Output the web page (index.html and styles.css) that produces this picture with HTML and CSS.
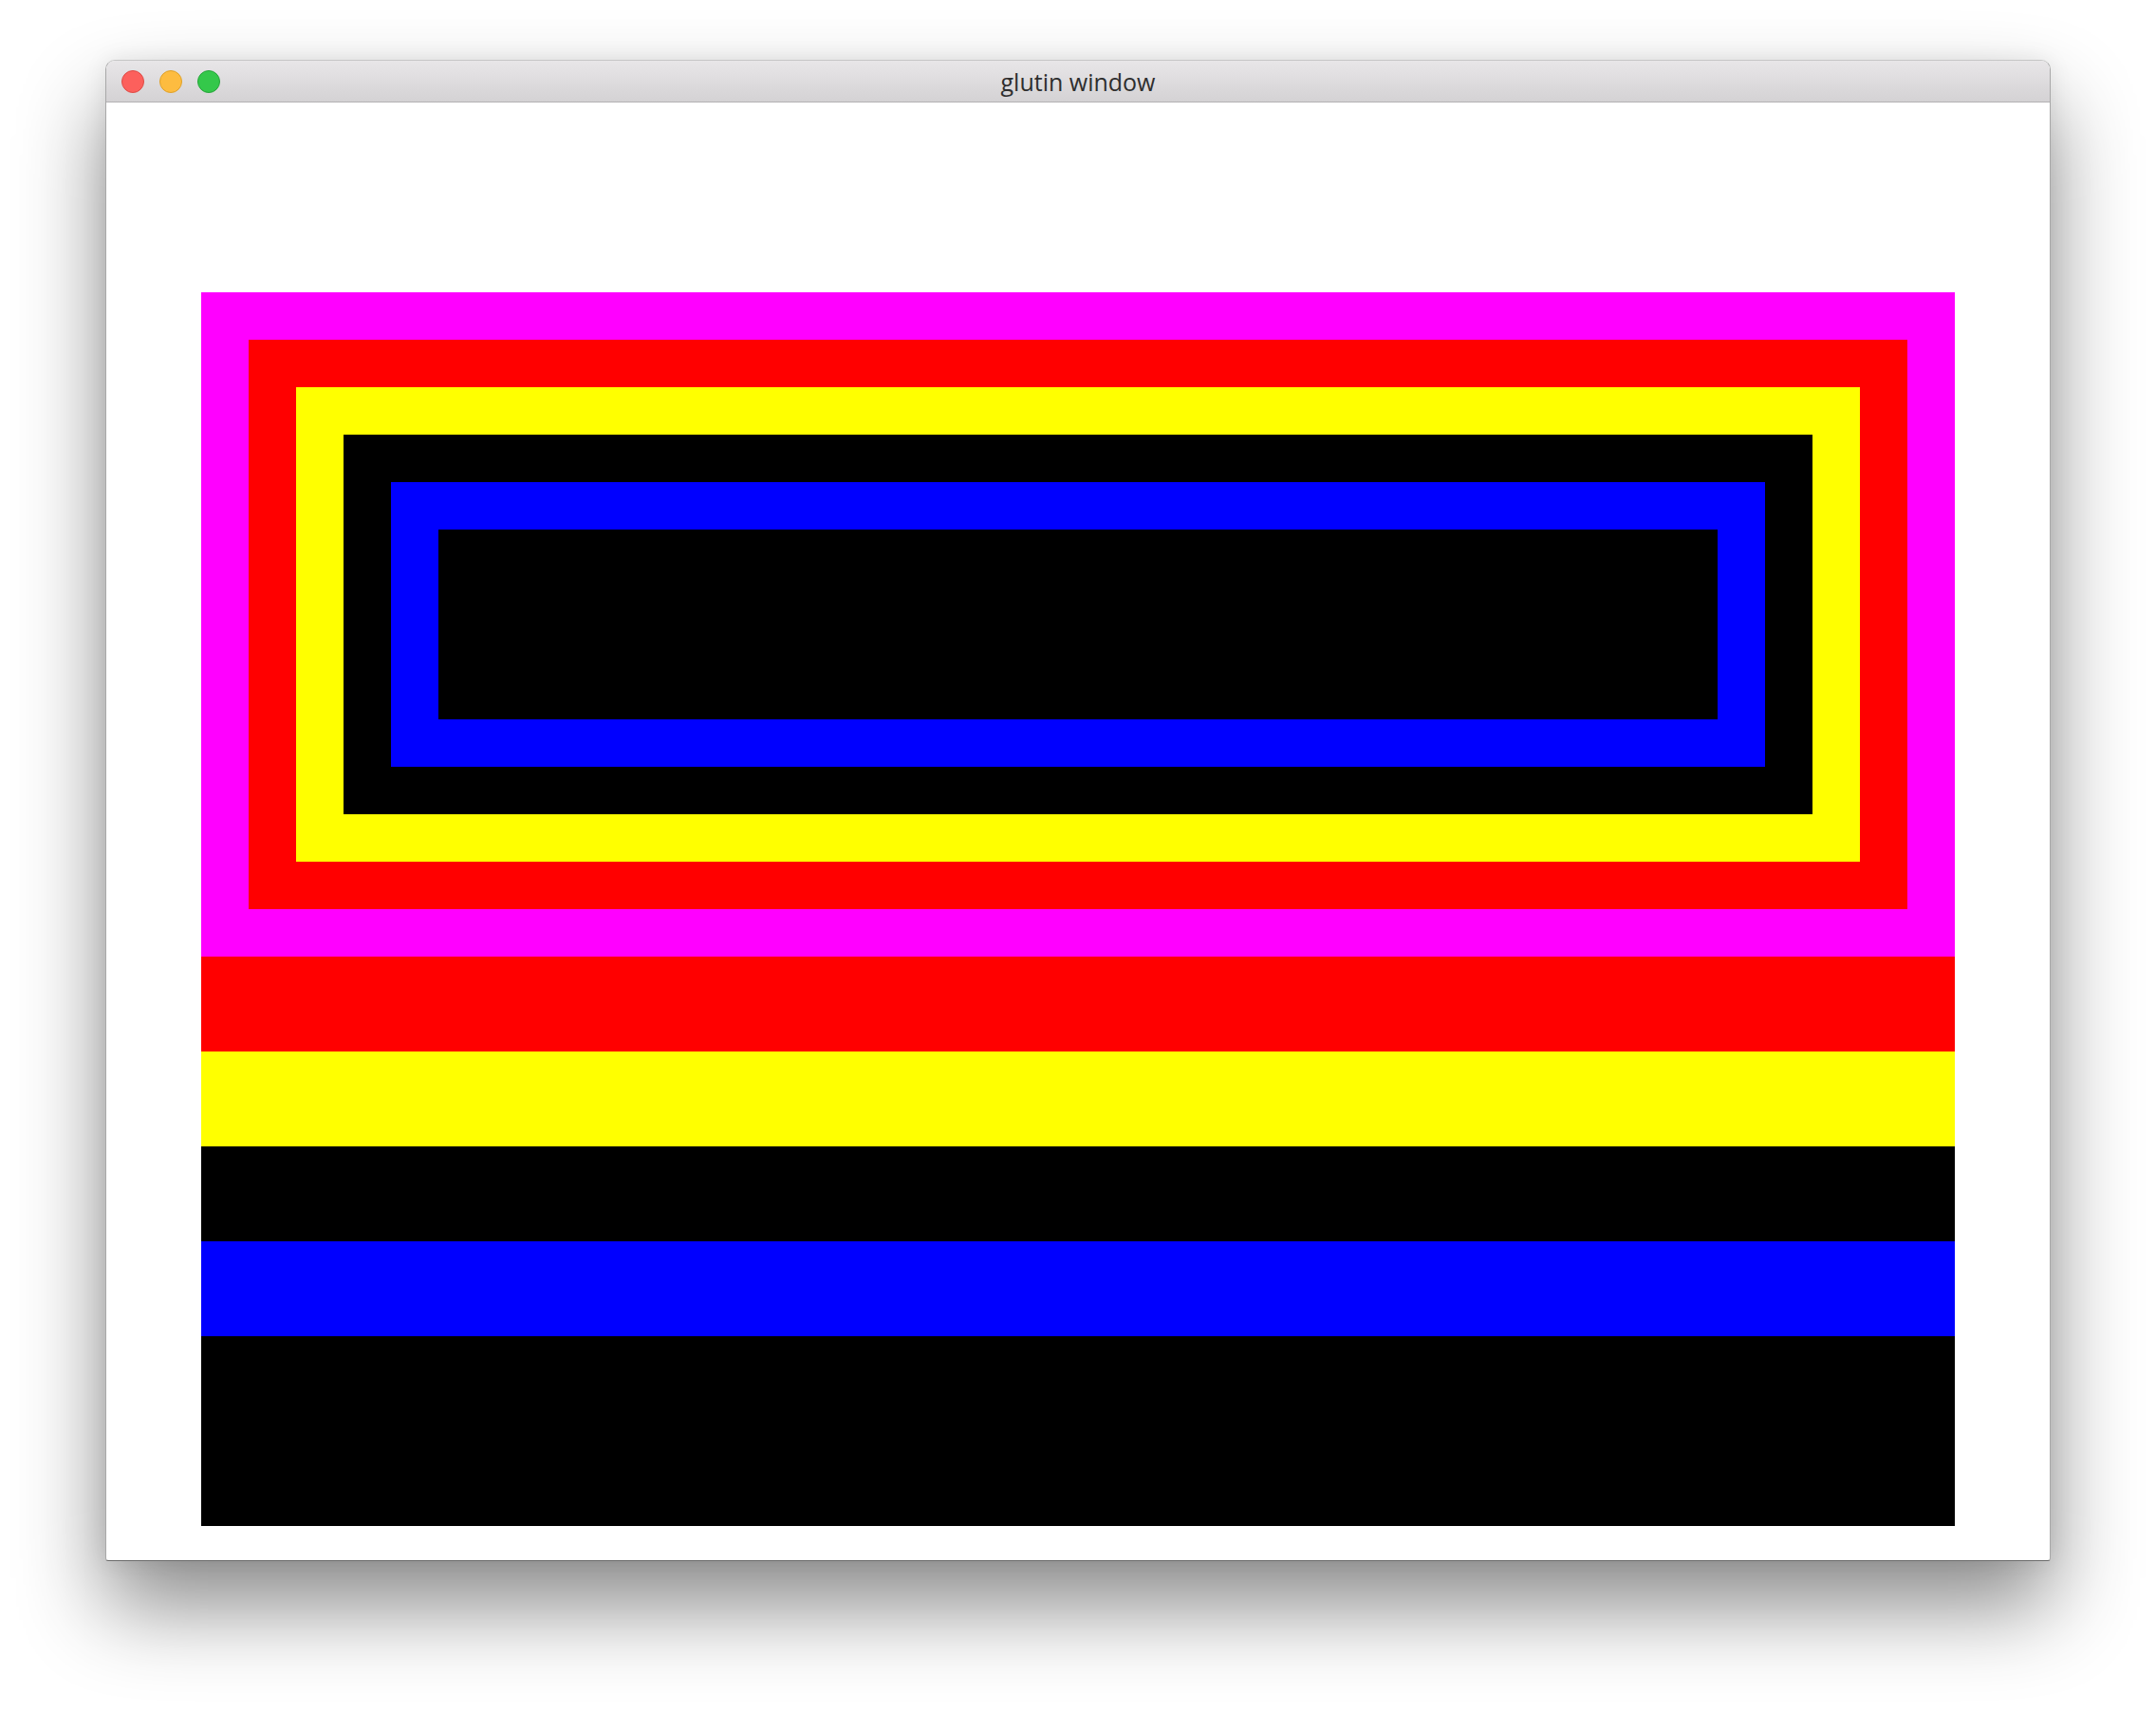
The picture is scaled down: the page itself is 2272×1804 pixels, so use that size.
FILE: index.html
```html
<!DOCTYPE html>
<html>
<head>
<meta charset="utf-8">
<link rel="stylesheet" href="styles.css">
</head>
<body>
<div class="window">
  <div class="titlebar">
    <div class="lights">
      <span class="light red"></span>
      <span class="light yellow"></span>
      <span class="light green"></span>
    </div>
    <div class="title">glutin window</div>
  </div>
  <div class="content">
    <div class="pattern">
      <div class="ring magenta">
        <div class="ring red-c">
          <div class="ring yellow-c">
            <div class="ring black-c">
              <div class="ring blue-c">
                <div class="core"></div>
              </div>
            </div>
          </div>
        </div>
      </div>
      <div class="band red-c"></div>
      <div class="band yellow-c"></div>
      <div class="band black-c"></div>
      <div class="band blue-c"></div>
      <div class="band-tall black-c"></div>
    </div>
  </div>
</div>
</body>
</html>
```

FILE: styles.css
```css
html, body {
  margin: 0;
  padding: 0;
  background: #ffffff;
}
body {
  width: 2272px;
  height: 1804px;
  overflow: hidden;
  padding: 63px 0 0 111px;
  box-sizing: border-box;
}
.window {
  width: 2048px;
  border: 1px solid #a8a8a8;
  border-top-color: #c6c6c6;
  border-bottom-color: #6a6a6a;
  border-radius: 10px 10px 3px 3px;
  overflow: hidden;
  background: #fff;
  box-shadow: 0 48px 90px rgba(0, 0, 0, 0.46), 0 0 24px rgba(0, 0, 0, 0.08);
}
.titlebar {
  position: relative;
  height: 43px;
  border-bottom: 1px solid #b3b1b3;
  background: linear-gradient(#e8e6e8, #d4d2d4);
  display: flex;
  align-items: center;
  justify-content: center;
}
.lights {
  position: absolute;
  left: 16px;
  top: 10px;
  display: flex;
  gap: 16px;
}
.light {
  display: block;
  width: 22px;
  height: 22px;
  border-radius: 50%;
  border: 1px solid;
}
.light.red { background: #fc605c; border-color: #de4b45; }
.light.yellow { background: #fdbc40; border-color: #dfa128; }
.light.green { background: #34c84a; border-color: #27a43a; }
.title {
  font-family: "Open Sans", "Liberation Sans", sans-serif;
  font-size: 25px;
  color: #2e2e2e;
  line-height: 43px;
  margin-top: 2px;
}
.content {
  height: 1536px;
  box-sizing: border-box;
  padding: 200px 100px 36px 100px;
}
.pattern {
  display: flex;
  flex-direction: column;
}
.ring {
  padding: 50px;
}
.core {
  height: 200px;
  background: #000;
}
.band { height: 100px; }
.band-tall { height: 200px; }
.magenta { background: #ff00ff; }
.red-c { background: #ff0000; }
.yellow-c { background: #ffff00; }
.black-c { background: #000000; }
.blue-c { background: #0000ff; }
```
